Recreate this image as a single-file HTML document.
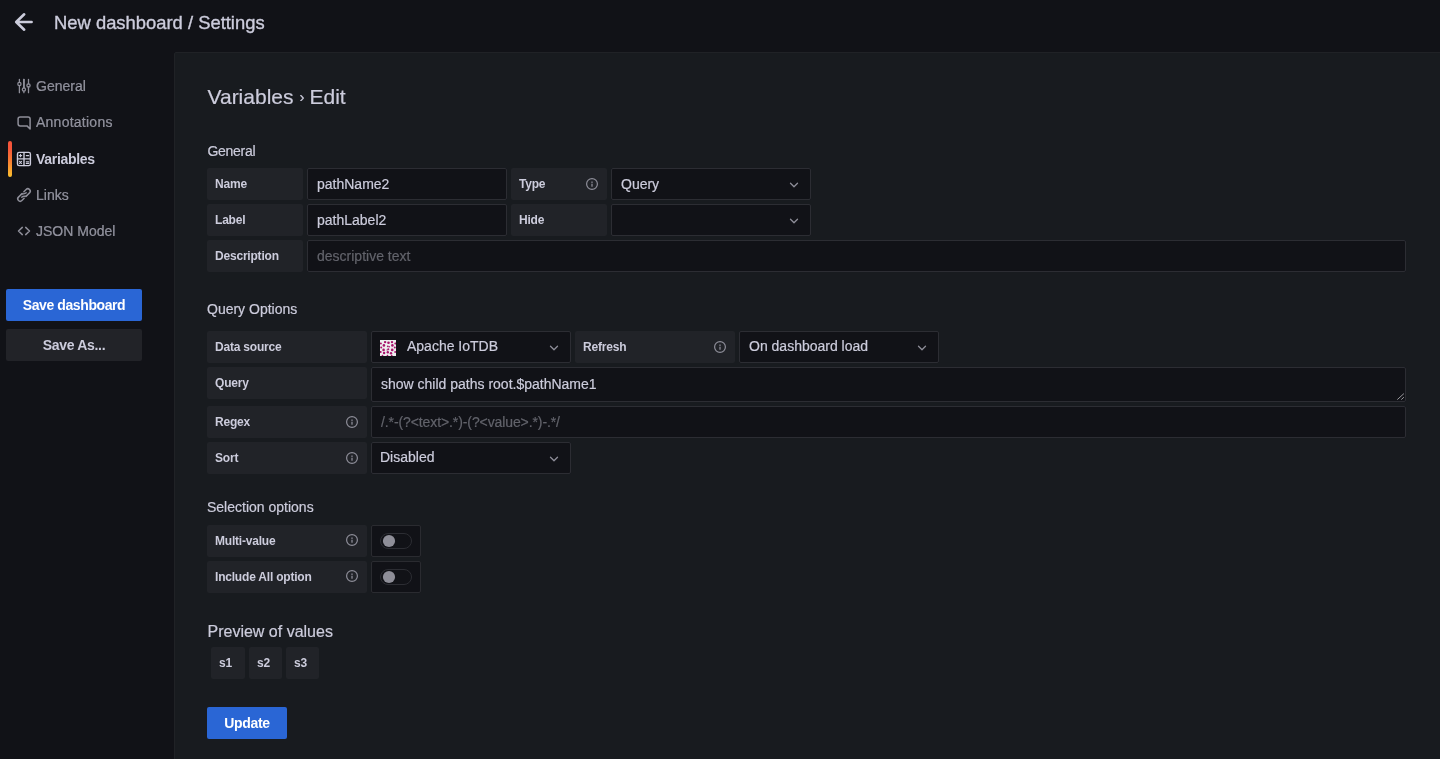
<!DOCTYPE html>
<html>
<head>
<meta charset="utf-8">
<style>
* { box-sizing: border-box; margin: 0; padding: 0; }
html, body { width: 1440px; height: 759px; overflow: hidden; }
body { will-change: transform; background: #111217; font-family: "Liberation Sans", sans-serif; color: #ccccdc; position: relative; }
.a { position: absolute; white-space: pre; }
.t { position: absolute; white-space: pre; line-height: 20px; -webkit-text-stroke: 0.2px currentColor; }
.nav { font-size: 14px; color: rgba(204,204,220,0.65); }
.panel { position: absolute; left: 174px; top: 52px; right: -2px; bottom: -2px; background: #181b1f; border: 1px solid #202226; border-radius: 2px; }
.btn { position: absolute; border-radius: 2px; font-size: 14px; font-weight: 700; text-align: center; line-height: 32px; height: 32px; }
.lbl { position: absolute; height: 32px; line-height: 32px; background: #212328; border-radius: 2px; font-size: 12px; font-weight: 700; padding-left: 8px; color: #ccccdc; letter-spacing: -0.2px; }
.inp { position: absolute; height: 32px; line-height: 30px; background: #111217; border: 1px solid #2c2d33; border-radius: 2px; font-size: 14px; padding-left: 9px; color: #ccccdc; -webkit-text-stroke: 0.2px currentColor; }
.ph { color: #62636b; }
.sec { font-size: 14px; }
svg { position: absolute; overflow: visible; }
</style>
</head>
<body>
<!-- header -->
<svg style="left:0;top:0" width="40" height="40" viewBox="0 0 40 40"><path d="M24.2 14.3 L16.2 22 L24.2 29.7 M16.4 22 H31.6" fill="none" stroke="#ccccdc" stroke-width="2.6" stroke-linecap="round" stroke-linejoin="round"/></svg>
<div class="t" style="left:54px;top:12.6px;font-size:18.4px;-webkit-text-stroke:0.35px #ccccdc;">New dashboard / Settings</div>

<!-- sidebar -->
<div class="t nav" style="left:36px;top:76.4px;">General</div>
<div class="t nav" style="left:36px;top:112.4px;letter-spacing:0.25px;">Annotations</div>
<div class="t nav" style="left:36px;top:149px;color:#ccccdc;font-weight:700;letter-spacing:-0.3px;-webkit-text-stroke:0;">Variables</div>
<div class="t nav" style="left:36px;top:185px;">Links</div>
<div class="t nav" style="left:36px;top:221px;">JSON Model</div>
<div class="a" style="left:8px;top:141px;width:4px;height:36px;border-radius:2px;background:linear-gradient(180deg,#f5553a 20%,#f87d33 55%,#fcc12f 100%);"></div>

<div class="btn" style="left:6px;top:289px;width:136px;background:#2a66d5;color:#fff;letter-spacing:-0.4px;">Save dashboard</div>
<div class="btn" style="left:6px;top:329px;width:136px;background:#222328;color:#ccccdc;letter-spacing:-0.3px;">Save As...</div>

<!-- panel -->
<div class="panel"></div>

<div class="t" style="left:207.5px;top:86.6px;font-size:21px;">Variables<span style="font-size:15px;position:relative;top:-2px;padding:0 5px 0 6px;">›</span>Edit</div>

<div class="t sec" style="left:207.5px;top:141px;letter-spacing:-0.3px;">General</div>
<div class="lbl" style="left:207px;top:168px;width:96px;">Name</div>
<div class="inp" style="left:307px;top:168px;width:200px;">pathName2</div>
<div class="lbl" style="left:511px;top:168px;width:96px;">Type</div>
<div class="inp" style="left:611px;top:168px;width:200px;">Query</div>
<div class="lbl" style="left:207px;top:204px;width:96px;">Label</div>
<div class="inp" style="left:307px;top:204px;width:200px;">pathLabel2</div>
<div class="lbl" style="left:511px;top:204px;width:96px;">Hide</div>
<div class="inp" style="left:611px;top:204px;width:200px;"></div>
<div class="lbl" style="left:207px;top:240px;width:96px;">Description</div>
<div class="inp ph" style="left:307px;top:240px;width:1099px;">descriptive text</div>

<div class="t sec" style="left:207px;top:298.9px;">Query Options</div>
<div class="lbl" style="left:207px;top:331px;width:160px;">Data source</div>
<div class="inp" style="left:371px;top:331px;width:200px;padding-left:35px;line-height:29px;">Apache IoTDB</div>
<div class="lbl" style="left:575px;top:331px;width:160px;">Refresh</div>
<div class="inp" style="left:739px;top:331px;width:200px;line-height:29px;">On dashboard load</div>
<div class="lbl" style="left:207px;top:367px;width:160px;">Query</div>
<div class="inp" style="left:371px;top:367px;width:1035px;height:35px;line-height:33px;">show child paths root.$pathName1</div>
<div class="lbl" style="left:207px;top:406px;width:160px;">Regex</div>
<div class="inp ph" style="left:371px;top:406px;width:1035px;letter-spacing:-0.1px;">/.*-(?&lt;text&gt;.*)-(?&lt;value&gt;.*)-.*/</div>
<div class="lbl" style="left:207px;top:442px;width:160px;">Sort</div>
<div class="inp" style="left:371px;top:442px;width:200px;line-height:28px;padding-left:8px;">Disabled</div>

<div class="t sec" style="left:207px;top:497px;">Selection options</div>
<div class="lbl" style="left:207px;top:525px;width:160px;">Multi-value</div>
<div class="inp" style="left:371px;top:525px;width:50px;border-color:#2a2b30;"></div>
<div class="lbl" style="left:207px;top:561px;width:160px;">Include All option</div>
<div class="inp" style="left:371px;top:561px;width:50px;border-color:#2a2b30;"></div>

<div class="t" style="left:207.5px;top:622.2px;font-size:16px;">Preview of values</div>
<div class="lbl" style="left:211px;top:647px;width:34px;">s1</div>
<div class="lbl" style="left:249px;top:647px;width:33px;">s2</div>
<div class="lbl" style="left:286px;top:647px;width:33px;">s3</div>

<div class="btn" style="left:207px;top:707px;width:80px;background:#2a66d5;color:#fff;letter-spacing:-0.3px;">Update</div>


<svg style="left:0;top:0;pointer-events:none" width="1440" height="759" viewBox="0 0 1440 759">
 <g fill="none" stroke-linecap="round" stroke-linejoin="round">
  <!-- sliders (General) -->
  <g stroke="#8e8e99" stroke-width="1.3">
   <path d="M19.4 79.3 V82.4 M19.4 85.6 V92.7 M23.9 79.3 V87.9 M23.9 91.1 V92.7 M28.5 79.3 V83.8 M28.5 87 V92.7"/>
   <path stroke-width="1.7" d="M23.9 79.6 V87.6"/>
   <circle cx="19.4" cy="84" r="1.6"/><circle cx="23.9" cy="89.5" r="1.6"/><circle cx="28.5" cy="85.4" r="1.6"/>
  </g>
  <!-- comment (Annotations) -->
  <path stroke="#8e8e99" stroke-width="1.5" d="M20.2 117 H28 Q30.1 117 30.1 119.1 V129 L27 125.9 H20.2 Q18.1 125.9 18.1 123.8 V119.1 Q18.1 117 20.2 117 Z"/>
  <!-- calculator (Variables) -->
  <g stroke="#ccccdc" stroke-width="1.4">
   <rect x="17.5" y="152.4" width="12.9" height="13.2" rx="1.6"/>
   <path d="M24 152.4 V165.6 M17.5 158.9 H30.4"/>
   <path stroke-width="1.1" d="M19.3 155.6 H21.7 M20.5 154.4 V156.8 M26.3 155.6 H28.7 M19.5 161.4 L21.5 163.4 M21.5 161.4 L19.5 163.4 M26.3 161.8 H28.7 M26.3 163.4 H28.7"/>
  </g>
  <!-- link (Links) -->
  <g stroke="#8e8e99" stroke-width="1.5" transform="translate(24 195) rotate(-45)">
   <path d="M-0.2 -2.4 H-5.4 A2.4 2.4 0 0 0 -5.4 2.4 H-2.2"/>
   <path d="M0.2 2.4 H5.4 A2.4 2.4 0 0 0 5.4 -2.4 H2.2"/>
   <path d="M-3.2 0 Q-2 -0.1 -0.6 1.2 Q0.6 2.4 1.8 2.4 M3.2 0 Q2 0.1 0.6 -1.2 Q-0.6 -2.4 -1.8 -2.4" stroke-width="1.3"/>
  </g>
  <!-- code (JSON Model) -->
  <path stroke="#8e8e99" stroke-width="1.5" d="M22.3 227.4 L18.5 231 L22.3 234.6 M25.7 227.4 L29.5 231 L25.7 234.6"/>
 </g>
</svg>
<svg style="left:0;top:0;pointer-events:none" width="1440" height="759" viewBox="0 0 1440 759"><circle cx="592" cy="184" r="5.4" stroke="#8e8e99" stroke-width="1.2" fill="none"/><rect x="591.2" y="181.5" width="1.6" height="1.4" fill="#8e8e99" opacity="0.8"/><rect x="591.2" y="183.7" width="1.6" height="3" fill="#8e8e99" opacity="0.8"/><circle cx="720" cy="347" r="5.4" stroke="#8e8e99" stroke-width="1.2" fill="none"/><rect x="719.2" y="344.5" width="1.6" height="1.4" fill="#8e8e99" opacity="0.8"/><rect x="719.2" y="346.7" width="1.6" height="3" fill="#8e8e99" opacity="0.8"/><circle cx="352" cy="422" r="5.4" stroke="#8e8e99" stroke-width="1.2" fill="none"/><rect x="351.2" y="419.5" width="1.6" height="1.4" fill="#8e8e99" opacity="0.8"/><rect x="351.2" y="421.7" width="1.6" height="3" fill="#8e8e99" opacity="0.8"/><circle cx="352" cy="458" r="5.4" stroke="#8e8e99" stroke-width="1.2" fill="none"/><rect x="351.2" y="455.5" width="1.6" height="1.4" fill="#8e8e99" opacity="0.8"/><rect x="351.2" y="457.7" width="1.6" height="3" fill="#8e8e99" opacity="0.8"/><circle cx="352" cy="540" r="5.4" stroke="#8e8e99" stroke-width="1.2" fill="none"/><rect x="351.2" y="537.5" width="1.6" height="1.4" fill="#8e8e99" opacity="0.8"/><rect x="351.2" y="539.7" width="1.6" height="3" fill="#8e8e99" opacity="0.8"/><circle cx="352" cy="576" r="5.4" stroke="#8e8e99" stroke-width="1.2" fill="none"/><rect x="351.2" y="573.5" width="1.6" height="1.4" fill="#8e8e99" opacity="0.8"/><rect x="351.2" y="575.7" width="1.6" height="3" fill="#8e8e99" opacity="0.8"/><path d="M790.5 183.3 L794 186.7 L797.5 183.3" stroke="#8e8e99" stroke-width="1.3" fill="none" stroke-linecap="round" stroke-linejoin="round"/><path d="M790.5 219.3 L794 222.7 L797.5 219.3" stroke="#8e8e99" stroke-width="1.3" fill="none" stroke-linecap="round" stroke-linejoin="round"/><path d="M550.5 346.3 L554 349.7 L557.5 346.3" stroke="#8e8e99" stroke-width="1.3" fill="none" stroke-linecap="round" stroke-linejoin="round"/><path d="M918.5 346.3 L922 349.7 L925.5 346.3" stroke="#8e8e99" stroke-width="1.3" fill="none" stroke-linecap="round" stroke-linejoin="round"/><path d="M550.5 457.3 L554 460.7 L557.5 457.3" stroke="#8e8e99" stroke-width="1.3" fill="none" stroke-linecap="round" stroke-linejoin="round"/><defs><clipPath id="dsc"><rect x="380" y="340" width="16" height="16"/></clipPath></defs><rect x="380" y="340" width="16" height="16" fill="#eeeeee"/><g fill="#a8146c" clip-path="url(#dsc)"><circle cx="385.1" cy="342.1" r="1.2"/><circle cx="388.5" cy="342.8" r="1.3"/><circle cx="392.0" cy="342.1" r="1.2"/><circle cx="380.9" cy="343.4" r="1.0"/><circle cx="395.3" cy="343.4" r="1.0"/><circle cx="383.9" cy="345.4" r="1.3"/><circle cx="392.4" cy="345.4" r="1.3"/><circle cx="387.8" cy="346.3" r="0.9"/><circle cx="389.2" cy="346.8" r="0.8"/><circle cx="381.2" cy="347.4" r="1.0"/><circle cx="394.8" cy="347.4" r="1.0"/><circle cx="388.3" cy="349.2" r="1.0"/><circle cx="387.2" cy="349.9" r="0.7"/><circle cx="383.6" cy="349.9" r="1.3"/><circle cx="392.2" cy="349.9" r="1.3"/><circle cx="380.7" cy="351.9" r="1.0"/><circle cx="395.2" cy="351.9" r="1.0"/><circle cx="384.1" cy="353.0" r="1.2"/><circle cx="387.8" cy="352.3" r="1.2"/><circle cx="391.0" cy="353.3" r="1.2"/><circle cx="382.5" cy="355.6" r="0.8"/><circle cx="387.5" cy="355.6" r="0.8"/><circle cx="391.7" cy="355.6" r="0.8"/></g><rect x="380.5" y="533.5" width="31" height="15" rx="7.5" fill="#111217" stroke="#2c2d33" stroke-width="1"/><circle cx="389" cy="541" r="6.1" fill="#8e8e98"/><rect x="380.5" y="569.5" width="31" height="15" rx="7.5" fill="#111217" stroke="#2c2d33" stroke-width="1"/><circle cx="389" cy="577" r="6.1" fill="#8e8e98"/><path d="M1397.3 399.6 L1403.9 393.6 M1401.3 399.6 L1403.9 397.2" stroke="#9a9a9e" stroke-width="1" fill="none"/></svg>
</body>
</html>
